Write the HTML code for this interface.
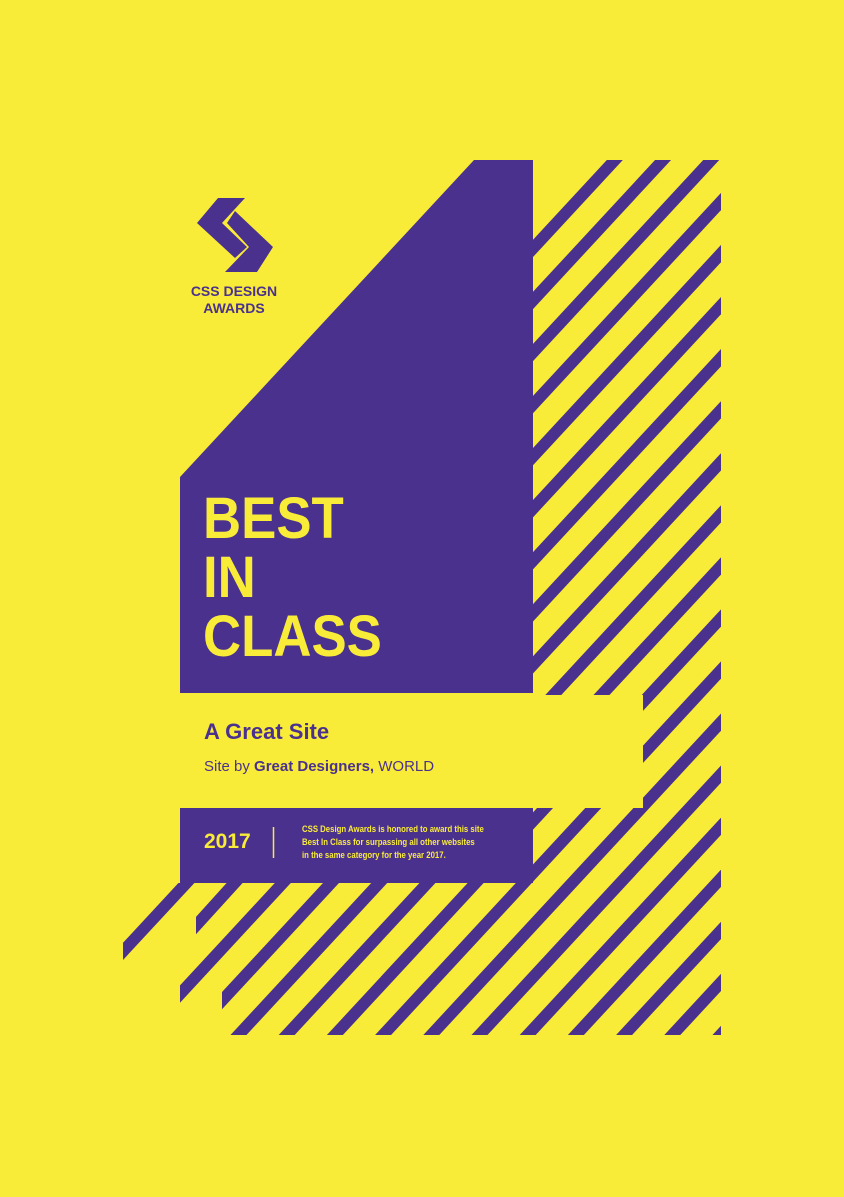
<!DOCTYPE html>
<html><head><meta charset="utf-8"><style>
html,body{margin:0;padding:0;background:#F9EC38;}
body{width:844px;height:1197px;position:relative;overflow:hidden;font-family:"Liberation Sans",sans-serif;}
svg{position:absolute;left:0;top:0;}
.t{position:absolute;color:#4B318E;white-space:nowrap;}
</style></head><body>
<svg width="844" height="1197" viewBox="0 0 844 1197">
<defs>
<polygon id="s" points="-138.9,150 -122.9,150 -956.2,1050 -972.2,1050" fill="#4B318E"/>
<clipPath id="cp"><polygon points="354,883 533,883 533,808 643,808 643,695 533,695 533,160 721,160 721,1035 213.7,1035"/></clipPath>
</defs>
<g clip-path="url(#cp)">
<use href="#s" transform="translate(755,0)"/>
<use href="#s" transform="translate(803.2,0)"/>
<use href="#s" transform="translate(851.4,0)"/>
<use href="#s" transform="translate(899.6,0)"/>
<use href="#s" transform="translate(947.8,0)"/>
<use href="#s" transform="translate(996,0)"/>
<use href="#s" transform="translate(1044.2,0)"/>
<use href="#s" transform="translate(1092.4,0)"/>
<use href="#s" transform="translate(1140.6,0)"/>
<use href="#s" transform="translate(1188.8,0)"/>
<use href="#s" transform="translate(1237,0)"/>
<use href="#s" transform="translate(1285.2,0)"/>
<use href="#s" transform="translate(1333.4,0)"/>
<use href="#s" transform="translate(1381.6,0)"/>
<use href="#s" transform="translate(1429.8,0)"/>
<use href="#s" transform="translate(1478,0)"/>
<use href="#s" transform="translate(1526.2,0)"/>
<use href="#s" transform="translate(1574.4,0)"/>
<use href="#s" transform="translate(1622.6,0)"/>
<use href="#s" transform="translate(1670.8,0)"/>
</g>
<polygon points="180,477 474,160 533,160 533,693 180,693" fill="#4B318E"/>
<rect x="180" y="808" width="353" height="75" fill="#4B318E"/>
<polygon points="178.4,883 194.4,883 123,960 123,942.8" fill="#4B318E"/>
<polygon points="226.6,883 242.6,883 196,934.2 196,916.9" fill="#4B318E"/>
<polygon points="274.8,883 290.8,883 180,1002.7 180,985.4" fill="#4B318E"/>
<polygon points="323,883 339,883 222,1009.3 222,992" fill="#4B318E"/>
<!-- logo -->
<polygon points="218,198 245,198 222,223 247,247 235,258 197,223" fill="#4B318E"/>
<polygon points="235,211 273,247 257,272 225,272 249,247 227,223" fill="#4B318E"/>
<line x1="273.5" y1="827" x2="273.5" y2="858" stroke="#F9EC38" stroke-width="1.5"/>
</svg>
<div class="t" style="left:184px;top:283px;width:100px;text-align:center;font-weight:bold;font-size:14px;line-height:17px;">CSS DESIGN<br>AWARDS</div>
<div class="t" style="left:203px;top:489px;font-weight:bold;font-size:58px;line-height:59px;color:#F9EC38;transform:scaleX(0.91);transform-origin:0 0;">BEST<br>IN<br>CLASS</div>
<div class="t" style="left:204px;top:719px;font-weight:bold;font-size:22px;">A Great Site</div>
<div class="t" style="left:204px;top:758px;font-size:15px;">Site by <b>Great Designers,</b> WORLD</div>
<div class="t" style="left:204px;top:830px;font-weight:bold;font-size:21px;color:#F9EC38;">2017</div>
<div class="t" style="left:302px;top:823px;font-weight:bold;font-size:9.5px;line-height:13px;color:#F9EC38;transform:scaleX(0.82);transform-origin:0 0;">CSS Design Awards is honored to award this site<br>Best In Class for surpassing all other websites<br>in the same category for the year 2017.</div>
</body></html>
